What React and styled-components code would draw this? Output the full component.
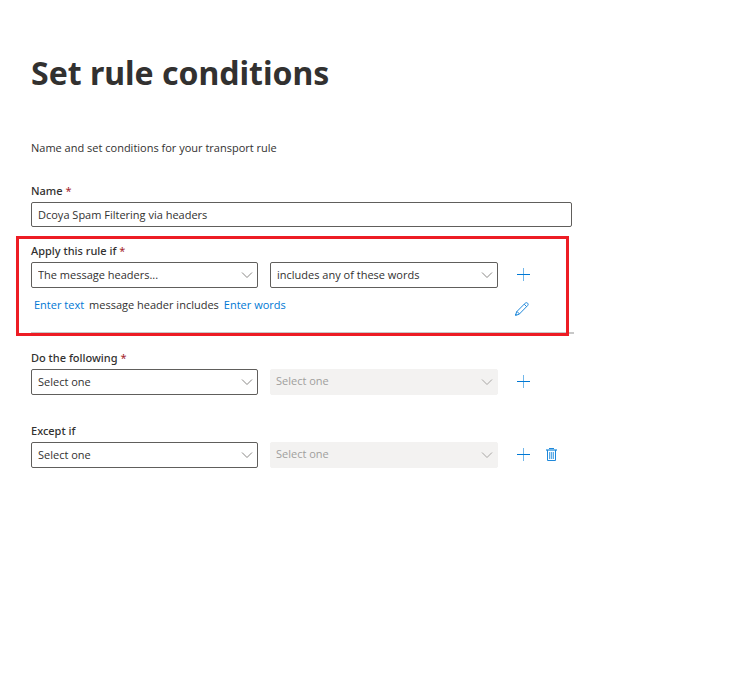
import React from "react";
import styled, { createGlobalStyle } from "styled-components";

const GlobalStyle = createGlobalStyle`
  * {
    box-sizing: border-box;
  }

  body {
    margin: 0;
    background-color: #ffffff;
    color: #323130;
    font-family: "Open Sans", "Noto Sans", sans-serif;
    font-size: 11px;
    line-height: 16px;
  }

  input,
  select,
  button {
    font: inherit;
    color: inherit;
  }
`;

const Page = styled.main`
  padding: 48px 31px;
`;

const Title = styled.h1`
  margin: 0;
  font-family: "Noto Sans", sans-serif;
  font-size: 32px;
  font-weight: bold;
  line-height: 50px;
`;

const Intro = styled.p`
  margin: 42px 0 27px;
`;

const Form = styled.form`
  max-width: 543px;
`;

const Label = styled.label`
  display: block;
  margin-bottom: 3px;
  font-family: "Noto Sans", sans-serif;
  font-weight: 500;

  span {
    color: #a4262c;
    font-weight: 400;
  }
`;

const TextInput = styled.input`
  display: block;
  width: 100%;
  max-width: 541px;
  height: 25px;
  padding: 0 6px;
  background-color: #ffffff;
  border: 1px solid #605e5c;
  border-radius: 2px;
`;

const Section = styled.section`
  position: relative;
  margin-bottom: ${(props) => props.$gap || 0}px;
`;

const Highlight = styled.div`
  position: absolute;
  inset: -7px 5px -2px -15px;
  border: 3px solid #ed1c24;
  pointer-events: none;
`;

const Row = styled.div`
  display: grid;
  grid-template-columns: minmax(0, 227fr) minmax(0, 228fr) 64px;
  column-gap: 12px;
  align-items: center;
`;

const SelectBox = styled.div`
  display: grid;
  align-items: center;

  select,
  svg {
    grid-area: 1 / 1;
  }

  svg {
    justify-self: end;
    margin-right: 5px;
    pointer-events: none;
  }
`;

const Select = styled.select`
  width: 100%;
  height: 26px;
  padding: 0 24px 0 6px;
  appearance: none;
  background-color: #ffffff;
  border: 1px solid #605e5c;
  border-radius: 2px;

  &:disabled {
    padding: 0 24px 2px 5px;
    background-color: #f3f2f1;
    border-color: #f3f2f1;
    color: #a19f9d;
    opacity: 1;
  }
`;

const Actions = styled.div`
  display: flex;
`;

const IconButton = styled.button`
  display: flex;
  align-items: center;
  justify-content: center;
  width: 28px;
  height: 26px;
  padding: 0;
  background: none;
  border: none;
  color: #0078d4;
  cursor: pointer;
`;

const Details = styled.div`
  display: flex;
  align-items: flex-end;
  justify-content: space-between;
  padding: 8px 38px 10px 3px;
  border-bottom: 2px solid #c8c8c8;
`;

const Sentence = styled.p`
  display: flex;
  gap: 5px;
  margin: 0 0 9px;

  a {
    color: #0078d4;
    text-decoration: none;
  }
`;

function ChevronIcon({ color = "#8a8886" }) {
  return (
    <svg width="12" height="12" viewBox="0 0 12 12" fill="none" aria-hidden="true">
      <path d="M1 3.5L6 8.5L11 3.5" stroke={color} />
    </svg>
  );
}

function PlusIcon() {
  return (
    <svg width="14" height="14" viewBox="0 0 14 14" fill="none" aria-hidden="true">
      <path d="M6.5 0V13" stroke="#71b7ea" />
      <path d="M0 6.5H13" stroke="#0078d4" />
    </svg>
  );
}

function PencilIcon() {
  return (
    <svg width="14" height="14" viewBox="0 0 14 14" fill="none" stroke="#1f88da" aria-hidden="true">
      <path d="M0.6 13.4L1.6 9.8L10.2 1.2C10.9 0.5 11.9 0.5 12.6 1.2C13.3 1.9 13.3 2.9 12.6 3.6L4.2 12.2L0.6 13.4Z" />
      <path d="M1.6 9.8C3 9.9 4.1 11 4.2 12.2M9.2 2.2L11.6 4.6" />
      <path d="M0.6 13.4L1 12" strokeWidth="1.4" />
    </svg>
  );
}

function TrashIcon() {
  return (
    <svg width="14" height="14" viewBox="0 0 14 14" fill="none" aria-hidden="true">
      <path d="M1 2H12" stroke="#71b7ea" strokeWidth="2" />
      <path d="M4 0.5H9M2.5 2V12.5H10.5V2" stroke="#1f88da" />
      <path d="M4.5 4V11M6.5 4V11M8.5 4V11" stroke="#4fa3e3" />
      <path d="M4 4H9V11H4Z" fill="#71b7ea" fillOpacity="0.4" />
    </svg>
  );
}

function Dropdown({ id, label, value, disabled }) {
  return (
    <SelectBox>
      <Select id={id} aria-label={label} disabled={disabled} defaultValue={value}>
        <option>{value}</option>
      </Select>
      <ChevronIcon color={disabled ? "#a8a6a4" : undefined} />
    </SelectBox>
  );
}

function RuleSection({ id, title, required, values, removable, gap, children }) {
  const [first, second] = values;
  return (
    <Section $gap={gap}>
      <Label htmlFor={id}>
        {title} {required && <span>*</span>}
      </Label>
      <Row>
        <Dropdown id={id} value={first || "Select one"} />
        <Dropdown
          label={`${title} detail`}
          value={second || "Select one"}
          disabled={!second}
        />
        <Actions>
          <IconButton type="button" aria-label="Add">
            <PlusIcon />
          </IconButton>
          {removable && (
            <IconButton type="button" aria-label="Delete">
              <TrashIcon />
            </IconButton>
          )}
        </Actions>
      </Row>
      {children}
    </Section>
  );
}

function App() {
  return (
    <Page>
      <GlobalStyle />
      <Title>Set rule conditions</Title>
      <Intro>Name and set conditions for your transport rule</Intro>
      <Form>
        <Section $gap={16}>
          <Label htmlFor="name">
            Name <span>*</span>
          </Label>
          <TextInput id="name" defaultValue="Dcoya Spam Filtering via headers" />
        </Section>
        <RuleSection
          id="apply"
          title="Apply this rule if"
          required
          values={["The message headers...", "includes any of these words"]}
          gap={16}
        >
          <Details>
            <Sentence>
              <a href="#text">Enter text</a>
              <span>message header includes</span>
              <a href="#words">Enter words</a>
            </Sentence>
            <IconButton type="button" aria-label="Edit">
              <PencilIcon />
            </IconButton>
          </Details>
          <Highlight />
        </RuleSection>
        <RuleSection
          id="action"
          title="Do the following"
          required
          values={[]}
          gap={28}
        />
        <RuleSection id="except" title="Except if" values={[]} removable />
      </Form>
    </Page>
  );
}

export default App;
